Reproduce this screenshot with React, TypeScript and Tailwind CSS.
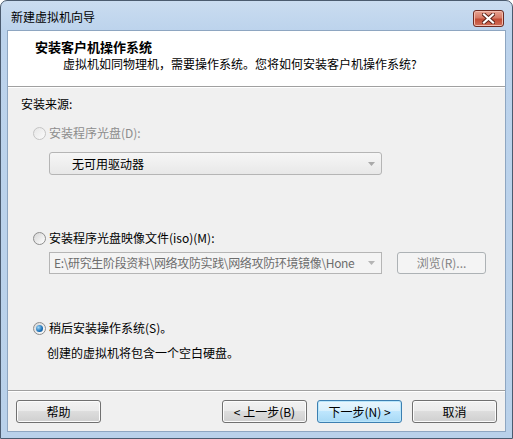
const font = { fontFamily: '"Microsoft YaHei", "Noto Sans CJK SC", "Noto Sans", sans-serif' };

// ── small pieces ─────────────────────────────────────────────────────────────

function Radio({ checked, disabled }: { checked?: boolean; disabled?: boolean }) {
  if (disabled) {
    return (
      <span className="w-[13px] h-[13px] rounded-full border border-[#c4c4c4] bg-gradient-to-br from-[#e6e6e6] to-[#fbfbfb] flex-shrink-0" />
    );
  }
  return (
    <span className="w-[13px] h-[13px] rounded-full border border-[#8d8d8d] bg-gradient-to-br from-[#d6d6d6] to-[#ffffff] flex items-center justify-center flex-shrink-0">
      {checked && (
        <span className="w-[7px] h-[7px] rounded-full bg-[radial-gradient(circle_at_35%_35%,#9fd7f7,#1a6fb6_60%,#0d4f8f)]" />
      )}
    </span>
  );
}

function Arrow({ color }: { color: string }) {
  return (
    <svg width="7" height="4" viewBox="0 0 7 4" className="flex-shrink-0">
      <path d="M0 0h7L3.5 4z" fill={color} />
    </svg>
  );
}

function Button({ label, primary }: { label: string; primary?: boolean }) {
  return (
    <div
      className={`w-[85px] h-[23px] rounded-[3px] border flex items-center justify-center text-[12px] text-black ${
        primary
          ? 'border-[#3c7fb1] shadow-[inset_0_0_0_1px_#b9e6fb] bg-[linear-gradient(#eaf6fd_0%,#d9f0fc_45%,#bee6fd_50%,#a7d9f5_100%)]'
          : 'border-[#707070] shadow-[inset_0_0_0_1px_#fcfcfc] bg-[linear-gradient(#f2f2f2_0%,#ebebeb_45%,#dddddd_50%,#cfcfcf_100%)]'
      }`}
    >
      {label}
    </div>
  );
}

// ── main component ────────────────────────────────────────────────────────────

export default function App() {
  return (
    <div className="w-[513px] h-[439px] text-[12px] leading-4" style={font}>
      {/* window frame */}
      <div className="w-full h-full rounded-t-[7px] border border-[#4b5b6f] bg-[linear-gradient(#cadcf0_0%,#bcd3ec_30px,#b9d1ea_100%)] flex flex-col px-[6px] pb-[6px]">
        {/* title bar */}
        <div className="h-[29px] flex items-center">
          <span className="ml-[4px] mt-[3px] text-black">新建虚拟机向导</span>
          <div className="ml-auto mr-[2px] mt-[6px] w-[31px] h-[17px] rounded-[3px] border border-[#6d2a21] bg-[linear-gradient(#e8a493_0%,#d67a66_45%,#c24b34_55%,#d0705a_100%)] shadow-[inset_0_0_0_1px_#f2bcae] flex items-center justify-center">
            <svg width="13" height="11" viewBox="0 0 13 11">
              <path d="M2 1.5l9 8M11 1.5l-9 8" stroke="#5a2117" strokeWidth="4" strokeLinecap="square" />
              <path d="M2 1.5l9 8M11 1.5l-9 8" stroke="#ffffff" strokeWidth="2.2" strokeLinecap="square" />
            </svg>
          </div>
        </div>

        {/* client area */}
        <div className="flex-1 border border-[#8ea6c1] bg-[#f0f0f0] flex flex-col">
          {/* header */}
          <div className="h-[56px] bg-white border-b border-[#a0a0a0] pt-[8px]">
            <div className="pl-[27px] font-bold text-[13px] text-black">安装客户机操作系统</div>
            <div className="pl-[55px] mt-[1px] text-black">虚拟机如同物理机，需要操作系统。您将如何安装客户机操作系统?</div>
          </div>

          {/* body */}
          <div className="flex-1 flex flex-col border-t border-white pl-[13px]">
            <div className="mt-[8px] h-4 text-black">安装来源:</div>

            <div className="mt-[13px] h-4 flex items-center gap-[3px] pl-[12px]">
              <Radio disabled />
              <span className="text-[#8d8d8d]">安装程序光盘(D):</span>
            </div>

            <div className="mt-[11px] ml-[28px] w-[333px] h-[23px] rounded-[3px] border border-[#b5b5b5] bg-[linear-gradient(#f6f6f6,#e8e8e8)] flex items-center pl-[22px] pr-[6px]">
              <span className="flex-1 text-black">无可用驱动器</span>
              <Arrow color="#a9a9a9" />
            </div>

            <div className="mt-[55px] h-4 flex items-center gap-[3px] pl-[12px]">
              <Radio />
              <span className="text-black">安装程序光盘映像文件(iso)(M):</span>
            </div>

            <div className="mt-[6px] flex items-center">
              <div className="ml-[28px] w-[333px] h-[22px] border border-[#b5b5b5] bg-[#f4f4f4] flex items-center pl-[4px] pr-[6px]">
                <span className="flex-1 min-w-0 whitespace-nowrap tracking-[-0.35px] text-[#6d6d6d]">
                  E:\研究生阶段资料\网络攻防实践\网络攻防环境镜像\Hone
                </span>
                <span className="ml-[4px] flex">
                  <Arrow color="#b5b5b5" />
                </span>
              </div>
              <div className="ml-[15px] w-[89px] h-[22px] rounded-[3px] border border-[#adb2b5] bg-[#f4f4f4] flex items-center justify-center text-[#838383]">
                浏览(R)...
              </div>
            </div>

            <div className="mt-[46px] h-4 flex items-center gap-[3px] pl-[12px]">
              <Radio checked />
              <span className="text-black">稍后安装操作系统(S)。</span>
            </div>

            <div className="mt-[9px] h-4 pl-[26px] text-black">创建的虚拟机将包含一个空白硬盘。</div>

            {/* footer */}
            <div className="mt-auto -ml-[13px] border-t border-[#a0a0a0]">
              <div className="border-t border-white flex items-center pl-[8px] pr-[8px] pt-[8px] pb-[8px]">
                <Button label="帮助" />
                <div className="ml-auto flex gap-[10px]">
                  <Button label="< 上一步(B)" />
                  <Button label="下一步(N) >" primary />
                  <Button label="取消" />
                </div>
              </div>
            </div>
          </div>
        </div>
      </div>
    </div>
  );
}
